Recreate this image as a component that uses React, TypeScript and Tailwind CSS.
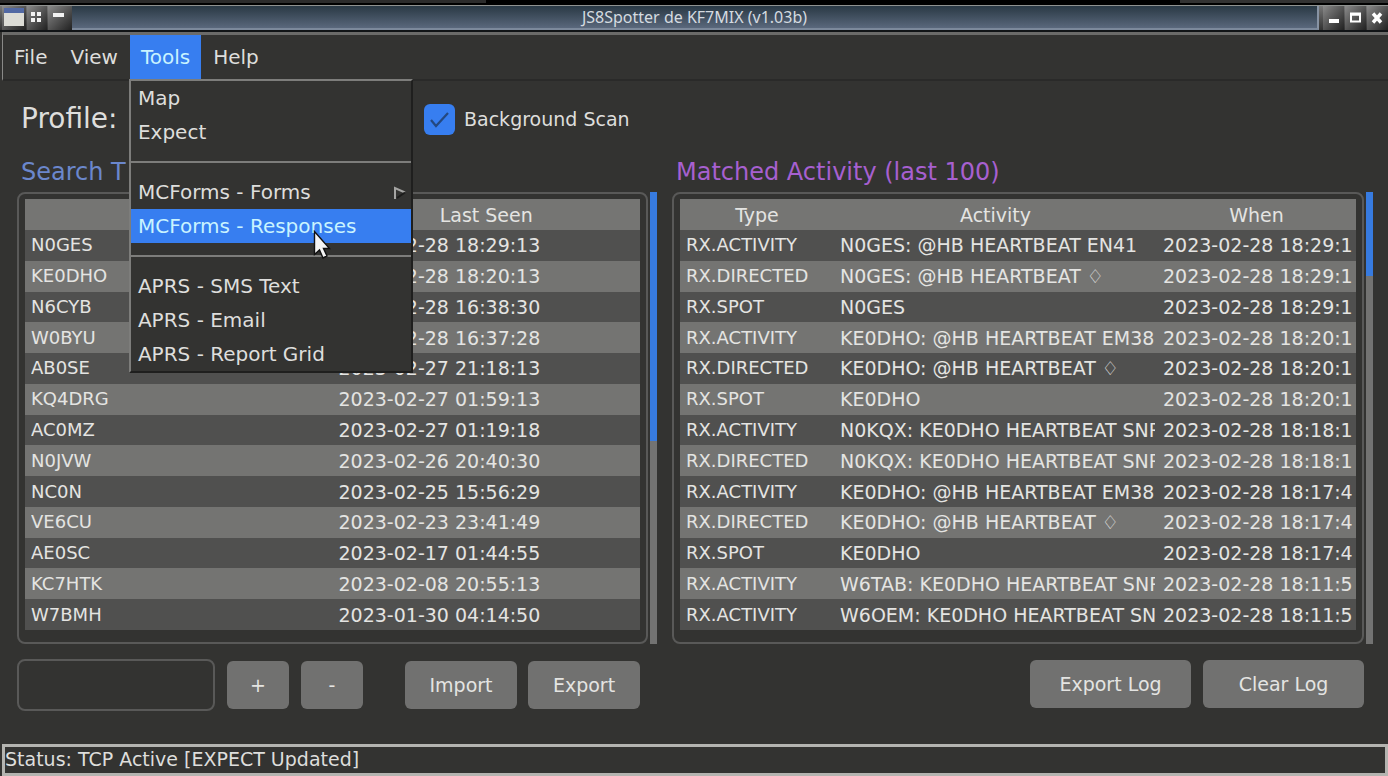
import React from "react";

const terms: string[][] = [
  ["N0GES", "2023-02-28 18:29:13"],
  ["KE0DHO", "2023-02-28 18:20:13"],
  ["N6CYB", "2023-02-28 16:38:30"],
  ["W0BYU", "2023-02-28 16:37:28"],
  ["AB0SE", "2023-02-27 21:18:13"],
  ["KQ4DRG", "2023-02-27 01:59:13"],
  ["AC0MZ", "2023-02-27 01:19:18"],
  ["N0JVW", "2023-02-26 20:40:30"],
  ["NC0N", "2023-02-25 15:56:29"],
  ["VE6CU", "2023-02-23 23:41:49"],
  ["AE0SC", "2023-02-17 01:44:55"],
  ["KC7HTK", "2023-02-08 20:55:13"],
  ["W7BMH", "2023-01-30 04:14:50"],
];

const activity: string[][] = [
  ["RX.ACTIVITY", "N0GES: @HB HEARTBEAT EN41", "2023-02-28 18:29:1"],
  ["RX.DIRECTED", "N0GES: @HB HEARTBEAT ♢", "2023-02-28 18:29:1"],
  ["RX.SPOT", "N0GES", "2023-02-28 18:29:1"],
  ["RX.ACTIVITY", "KE0DHO: @HB HEARTBEAT EM38", "2023-02-28 18:20:1"],
  ["RX.DIRECTED", "KE0DHO: @HB HEARTBEAT ♢", "2023-02-28 18:20:1"],
  ["RX.SPOT", "KE0DHO", "2023-02-28 18:20:1"],
  ["RX.ACTIVITY", "N0KQX: KE0DHO HEARTBEAT SNR", "2023-02-28 18:18:1"],
  ["RX.DIRECTED", "N0KQX: KE0DHO HEARTBEAT SNR", "2023-02-28 18:18:1"],
  ["RX.ACTIVITY", "KE0DHO: @HB HEARTBEAT EM38", "2023-02-28 18:17:4"],
  ["RX.DIRECTED", "KE0DHO: @HB HEARTBEAT ♢", "2023-02-28 18:17:4"],
  ["RX.SPOT", "KE0DHO", "2023-02-28 18:17:4"],
  ["RX.ACTIVITY", "W6TAB: KE0DHO HEARTBEAT SNR", "2023-02-28 18:11:5"],
  ["RX.ACTIVITY", "W6OEM: KE0DHO HEARTBEAT SN", "2023-02-28 18:11:5"],
];

const cap = "h-full bg-linear-to-br from-[#8a8a8a] via-[#555] to-[#222]";

function TitleBar() {
  return (
    <header className="flex h-[27px] items-stretch border-t border-b-2 border-t-[#8f9290] border-b-[#111416] bg-linear-to-b from-[#777] to-[#333]">
      <div className="flex gap-px pl-[2px]">
        <button aria-label="Window menu" className={`w-6 ${cap}`}>
          <svg viewBox="0 0 24 24" className="h-6 w-6">
            <rect x="2" y="2" width="20" height="18" fill="#dcdcd6" />
            <rect x="2" y="2" width="20" height="5" fill="#5269a4" />
          </svg>
        </button>
        <button aria-label="All workspaces" className={`w-5 ${cap}`}>
          <svg viewBox="0 0 20 24" className="h-6 w-5" fill="#f2f2f2">
            <rect x="4" y="6" width="4" height="4" />
            <rect x="10" y="6" width="4" height="4" />
            <rect x="4" y="12" width="4" height="4" />
            <rect x="10" y="12" width="4" height="4" />
          </svg>
        </button>
        <button aria-label="Shade" className={`w-6 ${cap}`}>
          <svg viewBox="0 0 24 24" className="h-6 w-6">
            <rect x="5" y="7" width="11" height="4" fill="#f2f2f2" />
          </svg>
        </button>
      </div>
      <h1 className="flex flex-1 items-center justify-center border-r-2 border-b-2 border-r-[#8793a4] border-b-[#7c899b] bg-linear-to-b from-[#2a3945] to-[#5a687c] font-['Noto_Sans',sans-serif] text-[16px] leading-5 text-[#d5dbe0]">
        JS8Spotter de KF7MIX (v1.03b)
      </h1>
      <div className="flex gap-px pl-1">
        <button aria-label="Minimize" className={`w-[21px] ${cap}`}>
          <svg viewBox="0 0 21 24" className="h-6 w-[21px]">
            <rect x="6" y="13" width="10" height="4" fill="#fff" />
          </svg>
        </button>
        <button aria-label="Maximize" className={`w-[21px] ${cap}`}>
          <svg viewBox="0 0 21 24" className="h-6 w-[21px]">
            <path d="M6 8.500h9v7H6z" fill="none" stroke="#fff" strokeWidth="2" />
            <path d="M5 8h11" stroke="#fff" strokeWidth="3" />
          </svg>
        </button>
        <button aria-label="Close" className={`w-[21px] ${cap}`}>
          <svg viewBox="0 0 21 24" className="h-6 w-[21px]">
            <path d="M6 7.500l8 9M14 7.500l-8 9" stroke="#fff" strokeWidth="3.400" />
          </svg>
        </button>
      </div>
    </header>
  );
}

function MenuItem({ label, active, submenu }: { label: string; active?: boolean; submenu?: boolean }) {
  return (
    <button
      role="menuitem"
      className={`flex h-[34px] w-full items-center justify-between pr-1 pl-[7px] text-left ${
        active ? "bg-[#377ef0] text-[#c9f3ff]" : ""
      }`}
    >
      {label}
      {submenu && (
        <svg viewBox="0 0 14 16" className="h-4 w-3.5">
          <path d="M2 15V4l10 4.500" fill="none" stroke="#a5a5a3" strokeWidth="2" />
          <path d="M12 8.500L4 14" stroke="#1c1c1b" strokeWidth="2" />
        </svg>
      )}
    </button>
  );
}

function MenuLine() {
  return <div role="separator" className="my-3 h-[2px] bg-[#7d7d7b]" />;
}

function ToolsMenu() {
  return (
    <div
      role="menu"
      className="absolute top-full -left-px z-10 w-[284px] border-2 border-t-[#7d7d7b] border-r-[#1f1f1e] border-b-[#1f1f1e] border-l-[#7d7d7b] bg-[#333331] text-[#dededc]"
    >
      <MenuItem label="Map" />
      <MenuItem label="Expect" />
      <MenuLine />
      <MenuItem label="MCForms - Forms" submenu />
      <MenuItem label="MCForms - Responses" active />
      <MenuLine />
      <MenuItem label="APRS - SMS Text" />
      <MenuItem label="APRS - Email" />
      <MenuItem label="APRS - Report Grid" />
      <svg viewBox="0 0 18 32" className="absolute top-[149px] left-[182px] h-8 w-[18px]">
        <path d="M1.500 1.500v23l5-4.500 3.500 8 4-2-3.500-7.500h6z" fill="#f4f4f4" stroke="#111" strokeWidth="1.400" />
      </svg>
    </div>
  );
}

function Panel({ table, thumb }: { table: React.ReactNode; thumb: string }) {
  return (
    <div className="flex gap-[2px]">
      <div className="min-w-0 flex-1 rounded-lg border-2 border-[#595958] px-[6px] pt-[5px] pb-3">{table}</div>
      <div className="w-[7px] bg-[#737372]">
        <div className={`bg-[#377be0] ${thumb}`} />
      </div>
    </div>
  );
}

type Column = { head: string; width: string; text: string; hideHead?: boolean };

function DataTable({ label, cols, rows }: { label: string; cols: Column[]; rows: string[][] }) {
  return (
    <table aria-label={label} className="h-[431px] w-full table-fixed leading-6 text-[#e4e4e2]">
      <colgroup>
        {cols.map((c) => (
          <col key={c.head} className={c.width} />
        ))}
      </colgroup>
      <thead>
        <tr className="h-[31px] bg-[#757573]">
          {cols.map((c) => (
            <th key={c.head} aria-label={c.head} className="p-0 text-[19px] font-normal">
              {c.hideHead ? null : c.head}
            </th>
          ))}
        </tr>
      </thead>
      <tbody>
        {rows.map((r, i) => (
          <tr key={i} className="bg-[#50504f] even:bg-[#747472]">
            {r.map((c, j) => (
              <td key={j} className={`py-0 pr-[2px] pl-[6px] ${cols[j].text}`}>
                <div className="overflow-hidden whitespace-nowrap">{c}</div>
              </td>
            ))}
          </tr>
        ))}
      </tbody>
    </table>
  );
}

const termCols: Column[] = [
  { head: "Term", width: "w-[50%]", text: "text-[18px]", hideHead: true },
  { head: "Last Seen", width: "w-[50%]", text: "text-[19px]" },
];

const activityCols: Column[] = [
  { head: "Type", width: "w-[154px]", text: "text-[18px]" },
  { head: "Activity", width: "w-auto", text: "text-[19px]" },
  { head: "When", width: "w-[199px]", text: "text-[19px]" },
];

const btn = "rounded-md bg-[#717170] text-[19px] leading-6 text-[#e4e4e2]";

export default function App() {
  return (
    <div className="flex min-h-screen flex-col bg-[#333331] font-['DejaVu_Sans',sans-serif] text-[#dededc]">
      <div className="flex h-[5px] justify-between border-b-2 border-black bg-black">
        <div className="w-[35%] bg-[#2c2c2c]" />
        <div className="w-[15%] bg-[#333]" />
      </div>
      <TitleBar />
      <nav className="ml-[2px] flex h-[49px] border-t-[3px] border-b-2 border-l border-t-[#6b6b69] border-b-[#2a2a29] border-l-[#8a8a88] text-[20px] leading-6">
        <button className="px-[11px]">File</button>
        <button className="px-3">View</button>
        <div className="relative flex">
          <button className="bg-[#377ef0] px-[11px] text-[#c9f3ff]">Tools</button>
          <ToolsMenu />
        </div>
        <button className="px-3">Help</button>
      </nav>

      <main className="flex flex-1 flex-col pr-[15px] pl-[17px]">
        <div className="flex h-[76px] items-center pl-1">
          <span className="w-[403px] text-[28px] leading-8">Profile:</span>
          <label className="flex items-center gap-[9px] text-[19px] leading-6">
            <span className="relative flex">
              <input
                type="checkbox"
                defaultChecked
                className="h-[31px] w-[31px] appearance-none rounded-md bg-[#377ef0]"
              />
              <svg viewBox="0 0 31 31" className="pointer-events-none absolute inset-0">
                <path d="M7 16l5 6L24 9" fill="none" stroke="#24487f" strokeWidth="2.200" />
              </svg>
            </span>
            Background Scan
          </label>
        </div>

        <div className="grid grid-cols-[640fr_701fr] gap-x-[15px]">
          <h2 className="h-[35px] pl-1 text-[24px] leading-[30px] text-[#6b87cc]">Search T</h2>
          <h2 className="h-[35px] pl-1 text-[24px] leading-[30px] text-[#a760d0]">Matched Activity (last 100)</h2>
          <Panel
            thumb="h-[249px]"
            table={<DataTable label="Search terms" cols={termCols} rows={terms} />}
          />
          <Panel
            thumb="h-[84px]"
            table={<DataTable label="Matched activity" cols={activityCols} rows={activity} />}
          />
          <div className="flex items-center pt-[15px]">
            <input
              aria-label="New search term"
              className="h-[52px] w-[198px] rounded-lg border-2 border-[#595958] bg-transparent px-2 text-[19px]"
            />
            <button className={`ml-3 h-12 w-[62px] ${btn}`}>+</button>
            <button className={`ml-3 h-12 w-[62px] ${btn}`}>-</button>
            <button className={`ml-[42px] h-12 w-[112px] ${btn}`}>Import</button>
            <button className={`ml-[11px] h-12 w-[112px] ${btn}`}>Export</button>
          </div>
          <div className="flex items-center justify-end gap-3 pt-3 pr-[9px]">
            <button className={`h-12 w-[161px] ${btn}`}>Export Log</button>
            <button className={`h-12 w-[161px] ${btn}`}>Clear Log</button>
          </div>
        </div>
      </main>

      <footer className="ml-[2px] h-8 border-[3px] border-[#b4b4b0] text-[19px] leading-6">
        Status: TCP Active [EXPECT Updated]
      </footer>
    </div>
  );
}
